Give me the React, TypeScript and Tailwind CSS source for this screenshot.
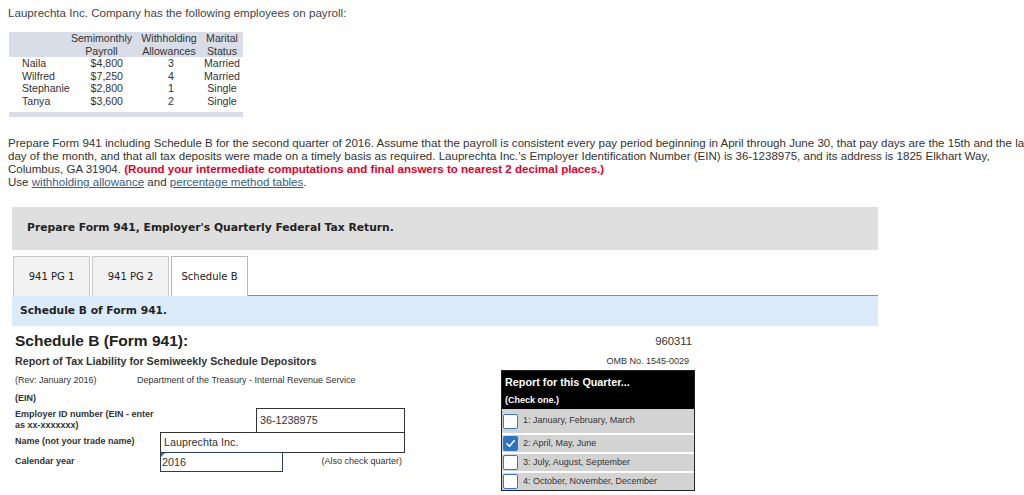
import React from "react";

const rows = [
  ["Naila", "$4,800", "3", "Married"],
  ["Wilfred", "$7,250", "4", "Married"],
  ["Stephanie", "$2,800", "1", "Single"],
  ["Tanya", "$3,600", "2", "Single"],
];

function Check({ checked }: { checked?: boolean }) {
  return checked ? (
    <div className="w-[15px] h-[15px] rounded-[2px] bg-[#2f74c0] flex items-center justify-center shrink-0">
      <svg width="11" height="11" viewBox="0 0 12 12">
        <path d="M2 6.3 L4.8 9 L10 3" fill="none" stroke="white" strokeWidth="1.8" strokeLinecap="round" strokeLinejoin="round" />
      </svg>
    </div>
  ) : (
    <div className="w-[15px] h-[15px] rounded-[2px] bg-white border-[1.5px] border-[#3b78c0] shrink-0" />
  );
}

export default function App() {
  return (
    <div className="w-[1024px] h-[495px] overflow-hidden bg-white text-[#333] font-['Liberation_Sans',Arial,sans-serif]">
      <div className="pl-[8px] pt-[6px] text-[11.6px] leading-[14px] text-[#444] whitespace-nowrap">
        Lauprechta Inc. Company has the following employees on payroll:
      </div>

      {/* employee table */}
      <div className="ml-[9px] mt-[12px] w-[234px] text-[10.6px] leading-[12.5px] text-[#333]">
        <div className="flex h-[25px] bg-[#d9dde7]">
          <div className="w-[61px]" />
          <div className="w-[63px] flex flex-col items-center justify-end">
            <span>Semimonthly</span>
            <span>Payroll</span>
          </div>
          <div className="w-[72px] flex flex-col items-center justify-end">
            <span>Withholding</span>
            <span>Allowances</span>
          </div>
          <div className="w-[38px] pr-[4px] flex flex-col items-center justify-end">
            <span>Marital</span>
            <span>Status</span>
          </div>
        </div>
        {rows.map((r) => (
          <div key={r[0]} className="flex h-[12.5px]">
            <div className="w-[61px] pl-[13px] whitespace-nowrap">{r[0]}</div>
            <div className="w-[63px] pr-[10px] text-right">{r[1]}</div>
            <div className="w-[72px] pl-[4px] text-center">{r[2]}</div>
            <div className="w-[38px] pr-[4px] flex justify-center whitespace-nowrap">{r[3]}</div>
          </div>
        ))}
        <div className="mt-[5px] h-[5px] bg-[#d9dde7]" />
      </div>

      {/* instructions */}
      <div className="mt-[20px] pl-[8px] text-[11.55px] leading-[13px] text-[#333] whitespace-nowrap">
        Prepare Form 941 including Schedule B for the second quarter of 2016. Assume that the payroll is consistent every pay period beginning in April through June 30, that pay days are the 15th and the last
        <br />
        day of the month, and that all tax deposits were made on a timely basis as required. Lauprechta Inc.'s Employer Identification Number (EIN) is 36-1238975, and its address is 1825 Elkhart Way,
        <br />
        Columbus, GA 31904.{" "}
        <span className="font-bold text-[#e1002a]">
          (Round your intermediate computations and final answers to nearest 2 decimal places.)
        </span>
        <br />
        Use <span className="underline text-[#3a5a88]">withholding allowance</span> and{" "}
        <span className="underline text-[#3a5a88]">percentage method tables</span>.
      </div>

      {/* gray header bar */}
      <div className="ml-[12px] mt-[18px] w-[866px] h-[43px] bg-[#dfdfdf] flex items-center pl-[15px] font-['DejaVu_Sans',Verdana,sans-serif] text-[10.75px] font-bold text-[#222]">
        Prepare Form 941, Employer's Quarterly Federal Tax Return.
      </div>

      {/* tabs */}
      <div className="ml-[12px] mt-[6px] w-[866px] flex h-[40px] pl-[1px] font-['DejaVu_Sans',Verdana,sans-serif] text-[10px] text-[#222]">
        <div className="w-[77px] bg-[#f1f1f1] border border-b-0 border-[#cacaca] flex items-center justify-center">941 PG 1</div>
        <div className="w-[77px] ml-[2px] bg-[#f1f1f1] border border-b-0 border-[#cacaca] flex items-center justify-center">941 PG 2</div>
        <div className="w-[77px] ml-[2px] bg-white border border-b-0 border-[#b8b8b8] flex items-center justify-center">Schedule B</div>
        <div className="flex-1 border-b border-[#8f8f8f]" />
      </div>
      <div className="ml-[12px] w-[866px] h-[30px] bg-[#dbebf9] flex items-center pl-[8px] font-['DejaVu_Sans',Verdana,sans-serif] text-[10.7px] font-bold text-[#222]">
        Schedule B of Form 941.
      </div>

      {/* schedule B form */}
      <div className="flex">
        <div className="w-[501px] pl-[15px]">
          <div className="mt-[6px] text-[15.5px] leading-[18px] font-bold text-[#222]">Schedule B (Form 941):</div>
          <div className="mt-[4px] text-[10.7px] leading-[14px] font-bold text-[#333]">
            Report of Tax Liability for Semiweekly Schedule Depositors
          </div>
          <div className="mt-[6.5px] flex text-[9px] leading-[11px] text-[#333]">
            <span className="w-[122px]">(Rev: January 2016)</span>
            <span>Department of the Treasury - Internal Revenue Service</span>
          </div>
          <div className="mt-[7.5px] text-[9px] leading-[11px] font-bold text-[#333]">(EIN)</div>

          <div className="mt-[4px] flex h-[24px]">
            <div className="w-[145px] pt-[1px] text-[9px] leading-[11px] font-bold text-[#333]">
              Employer ID number (EIN - enter as xx-xxxxxxx)
            </div>
            <div className="ml-[96px] w-[149px] h-[25px] border border-[#333] bg-white flex items-center pl-[3px] text-[10.8px]">
              36-1238975
            </div>
          </div>
          <div className="flex h-[20px] items-stretch">
            <div className="w-[145px] flex items-center text-[9px] font-bold text-[#333]">Name (not your trade name)</div>
            <div className="w-[245px] h-[21px] border border-[#333] bg-white flex items-center pl-[3px] text-[10.8px]">
              Lauprechta Inc.
            </div>
          </div>
          <div className="flex h-[19px] items-stretch">
            <div className="w-[145px] flex items-center text-[9px] font-bold text-[#333]">Calendar year</div>
            <div className="relative w-[123px] h-[19.5px] border-[1.5px] border-[#2c3d56] bg-white flex items-center pl-[1px] text-[10.8px]">
              2016
              <svg className="absolute left-0 top-0" width="5" height="5" viewBox="0 0 5 5">
                <path d="M0 0 H4 L0 4 Z" fill="#3a6fb5" />
              </svg>
            </div>
            <div className="w-[119px] flex items-center justify-end text-[9px] text-[#333]">(Also check quarter)</div>
          </div>
        </div>

        <div className="w-[194px]">
          <div className="mt-[8px] text-right pr-[3px] text-[11.3px] leading-[14px] text-[#333]">960311</div>
          <div className="mt-[7.5px] text-right pr-[6px] text-[9px] leading-[11px] text-[#333]">OMB No. 1545-0029</div>
          <div className="mt-[3.5px] border border-[#222] bg-[#d3d3d3]">
            <div className="h-[38px] bg-black pl-[3px] pt-[4px] text-white font-bold">
              <div className="text-[10.8px] leading-[14px]">Report for this Quarter...</div>
              <div className="mt-[6px] text-[9px] leading-[11px]">(Check one.)</div>
            </div>
            <div className="h-[24px] flex items-center gap-[5px] pl-[1px] text-[9px] text-[#333]">
              <Check /> 1: January, February, March
            </div>
            <div className="h-[19px] border-t-2 border-white flex items-center gap-[5px] pl-[1px] text-[9px] text-[#333]">
              <Check checked /> 2: April, May, June
            </div>
            <div className="h-[19px] border-t-2 border-white flex items-center gap-[5px] pl-[1px] text-[9px] text-[#333]">
              <Check /> 3: July, August, September
            </div>
            <div className="h-[19px] border-t-2 border-white flex items-center gap-[5px] pl-[1px] text-[9px] text-[#333]">
              <Check /> 4: October, November, December
            </div>
          </div>
        </div>
      </div>
    </div>
  );
}
